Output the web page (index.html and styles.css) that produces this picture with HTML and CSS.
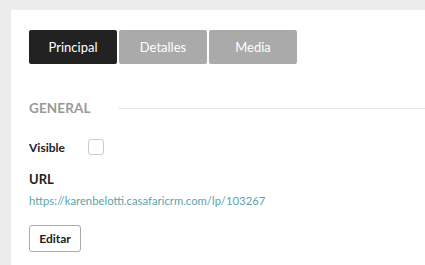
FILE: index.html
```html
<!DOCTYPE html>
<html>
<head>
<meta charset="utf-8">
<link rel="stylesheet" href="styles.css">
</head>
<body>
<div class="panel">
  <div class="tabs">
    <div class="tab active">Principal</div>
    <div class="tab">Detalles</div>
    <div class="tab">Media</div>
  </div>
  <div class="section">
    <span class="section-title">GENERAL</span>
    <span class="section-line"></span>
  </div>
  <div class="field-row">
    <span class="label">Visible</span>
    <span class="checkbox"></span>
  </div>
  <div class="url-label">URL</div>
  <a class="url-link" href="#">https://karenbelotti.casafaricrm.com/lp/103267</a>
  <button class="btn">Editar</button>
</div>
</body>
</html>
```
FILE: styles.css
```css
html, body {
  margin: 0;
  padding: 0;
  background: #ececec;
  font-family: Lato, "Open Sans", sans-serif;
  overflow: hidden;
  height: 265px;
}
.panel {
  margin: 10px 0 0 11px;
  background: #fff;
  padding: 20px 0 0 18px;
  height: 255px;
  box-sizing: border-box;
  display: flex;
  flex-direction: column;
  align-items: flex-start;
}
.panel > * {
  flex-shrink: 0;
}
.tabs {
  display: flex;
  gap: 2px;
}
.tab {
  width: 88px;
  height: 34px;
  display: flex;
  align-items: center;
  justify-content: center;
  background: #aaaaaa;
  color: #fff;
  font-size: 13px;
  border-radius: 2px;
}
.tab.active {
  background: #222222;
}
.section {
  margin-top: 36px;
  display: flex;
  align-items: center;
  width: 100%;
}
.section-title {
  color: #999;
  font-size: 13.5px;
  font-weight: 700;
  letter-spacing: 0.1px;
  line-height: 16px;
}
.section-line {
  flex: 1;
  height: 1px;
  background: #e8e8e8;
  margin-left: 27px;
}
.field-row {
  margin-top: 23px;
  display: flex;
  align-items: center;
}
.label {
  font-size: 12px;
  font-weight: 700;
  color: #222;
  width: 59px;
}
.checkbox {
  width: 14px;
  height: 14px;
  border: 1px solid #ccc;
  border-radius: 3px;
}
.url-label {
  margin-top: 16px;
  font-size: 13px;
  font-weight: 700;
  color: #222;
  line-height: 16px;
}
.url-link {
  margin-top: 6px;
  color: #5ea3ac;
  font-size: 11.3px;
  text-decoration: none;
  line-height: 16px;
}
.btn {
  margin-top: 16px;
  width: 52px;
  height: 27px;
  background: #fff;
  border: 1px solid #aaa;
  border-radius: 3px;
  font-family: Lato, sans-serif;
  font-size: 12px;
  font-weight: 700;
  color: #222;
  padding: 0;
}
```
